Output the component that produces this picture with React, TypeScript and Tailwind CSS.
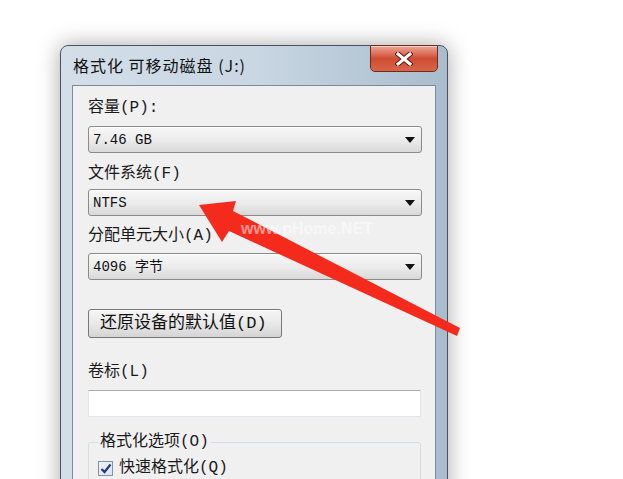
import React from 'react';

const mono = "font-['Liberation_Mono','Noto_Sans_CJK_SC',monospace]";

function DropArrow() {
  return (
    <svg width="10" height="6" viewBox="0 0 10 6" className="shrink-0">
      <path d="M0 0 L10 0 L5 6 Z" fill="#111" />
    </svg>
  );
}

function Combo({ value }: { value: string }) {
  return (
    <div className="h-[27px] w-[334px] rounded-[3px] border border-[#8a8a8a] bg-linear-to-b from-[#f7f7f7] via-[#ececec] to-[#d9d9d9] flex items-center justify-between pl-[4px] pr-[6px] shadow-[inset_0_1px_0_#ffffff]">
      <span className={`${mono} text-[14px] leading-none text-[#111]`}>{value}</span>
      <DropArrow />
    </div>
  );
}

function Label({ children, className = '' }: { children: React.ReactNode; className?: string }) {
  return <div className={`${mono} text-[16px] leading-[20px] text-[#1a1a1a] ${className}`}>{children}</div>;
}

export default function App() {
  return (
    <div className="w-[623px] h-[479px] bg-white relative overflow-hidden">
      <div className="pt-[45px] pl-[60px]">
        {/* window */}
        <div className="w-[388px] h-[470px] rounded-t-[8px] border border-[#48535f] bg-linear-to-r from-[#d3dee8] via-[#c9d7e3] to-[#a9bccd] px-[11px] shadow-[0_0_22px_rgba(0,0,0,0.35)]">
          {/* title bar */}
          <div className="h-[39px] flex items-start justify-between">
            <span className="pt-[8px] pl-[1px] font-['Noto_Sans_CJK_SC',sans-serif] text-[16px] leading-[22px] tracking-[1px] text-[#111]">
              格式化 可移动磁盘 (J:)
            </span>
            <div className="mr-[-2px] mt-[-1px] w-[68px] h-[27px] rounded-b-[5px] border border-[#6e2b20] bg-linear-to-b from-[#eba696] via-[#cf4b31] to-[#d8664a] flex items-center justify-center shadow-[inset_0_1px_0_rgba(255,255,255,0.5)]">
              <svg width="18" height="14" viewBox="0 0 18 14">
                <path d="M3 2 L15 12 M15 2 L3 12" stroke="#5a1a10" strokeWidth="5" strokeLinecap="square" />
                <path d="M3 2 L15 12 M15 2 L3 12" stroke="#ffffff" strokeWidth="3" strokeLinecap="square" />
              </svg>
            </div>
          </div>

          {/* client area */}
          <div className="h-[420px] border border-[#7d8b99] bg-[#f0f0f0] pt-[12px] pl-[15px]">
            <Label>容量(P):</Label>
            <div className="mt-[8px]">
              <Combo value="7.46 GB" />
            </div>

            <Label className="mt-[11px]">文件系统(F)</Label>
            <div className="mt-[5px]">
              <Combo value="NTFS" />
            </div>

            <Label className="mt-[10px]">分配单元大小(A)</Label>
            <div className="mt-[7px]">
              <Combo value="4096 字节" />
            </div>

            <div className="mt-[29px] w-[194px] h-[29px] rounded-[3px] border border-[#777] bg-linear-to-b from-[#f5f5f5] via-[#e9e9e9] to-[#d4d4d4] flex items-center pl-[11px] shadow-[inset_0_1px_0_#ffffff]">
              <span className={`${mono} text-[17px] leading-none text-[#111]`}>还原设备的默认值(D)</span>
            </div>

            <Label className="mt-[24px]">卷标(L)</Label>
            <div className="mt-[8px] w-[333px] h-[27px] bg-white border border-[#e1e6ec] border-t-[#a9abb0]" />

            <fieldset className="mt-[15px] w-[333px] h-[80px] rounded-[3px] border border-[#d8dde2] pl-[9px]">
              <legend className={`${mono} px-[2px] text-[16px] leading-[20px] text-[#1a1a1a]`}>格式化选项(O)</legend>
              <div className="mt-[6px] flex items-center gap-[6px]">
                <div className="w-[15px] h-[15px] border border-[#8793a3] bg-linear-to-br from-[#eef2f7] to-[#dfe6ee] flex items-center justify-center">
                  <svg width="12" height="11" viewBox="0 0 12 11">
                    <path d="M1.5 6 L4.5 9 L10.5 1.5" stroke="#203a86" strokeWidth="2.2" fill="none" />
                  </svg>
                </div>
                <span className={`${mono} text-[16px] leading-[20px] text-[#1a1a1a]`}>快速格式化(Q)</span>
              </div>
            </fieldset>
          </div>
        </div>
      </div>

      {/* red annotation arrow */}
      <svg className="absolute inset-0 pointer-events-none" width="623" height="479" viewBox="0 0 623 479">
        <polygon
          points="199,205 236,201 233,211 460,328 457,336 229,231 222,242"
          fill="#f42a1c"
        />
      </svg>
      <span className="absolute left-[241px] top-[221px] font-['Liberation_Sans',sans-serif] font-bold text-[16px] leading-none text-white opacity-50 pointer-events-none">
        www.pHome.NET
      </span>
    </div>
  );
}
